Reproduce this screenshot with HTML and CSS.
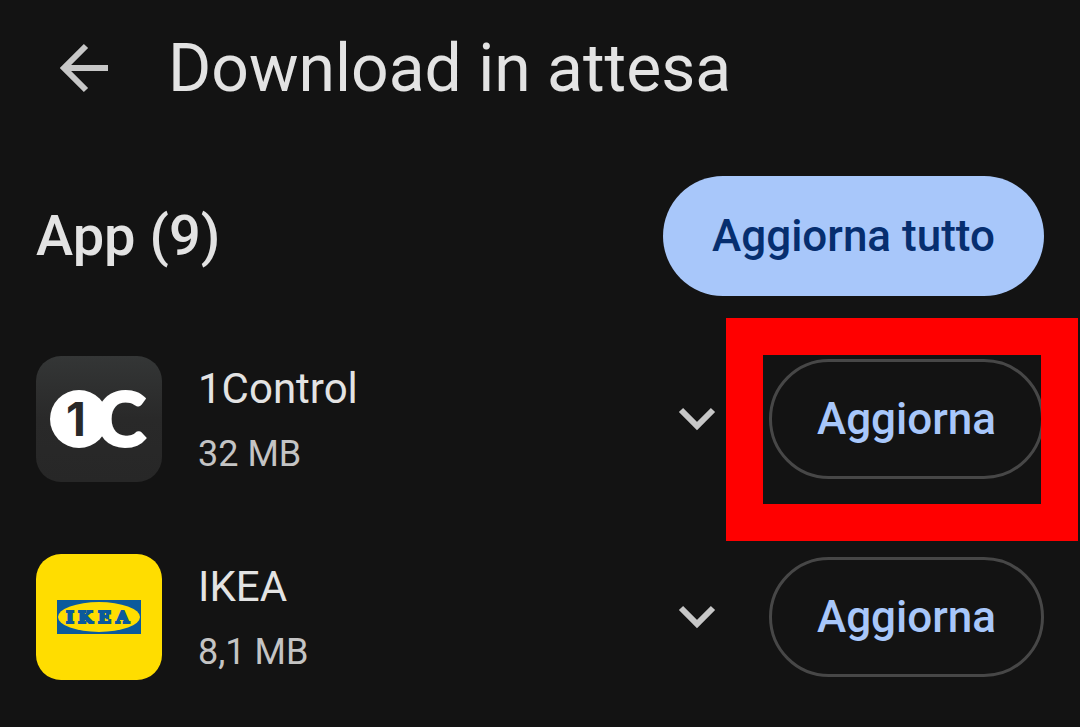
FILE: index.html
```html
<!DOCTYPE html>
<html lang="it">
<head>
    <meta charset="UTF-8">
    <meta name="viewport" content="width=device-width, initial-scale=1.0">
    <title>Download in attesa</title>
    <link rel="stylesheet" href="styles.css">
</head>
<body>
    <header class="topbar">
        <button class="icon-btn" aria-label="Indietro">
            <svg width="72" height="72" viewBox="0 0 72 72" fill="none" stroke="#c7c7c7" stroke-width="6">
                <path d="M60 36H16M38 14L16 36L38 58"/>
            </svg>
        </button>
        <h1>Download in attesa</h1>
    </header>

    <main>
        <div class="section-head">
            <h2>App (9)</h2>
            <button class="btn btn-filled">Aggiorna tutto</button>
        </div>

        <ul class="app-list">
            <li class="app">
                <svg class="app-icon" viewBox="0 0 126 126" role="img" aria-label="1Control">
                    <defs>
                        <linearGradient id="dark" x1="0" y1="0" x2="0" y2="1">
                            <stop offset="0" stop-color="#343636"/>
                            <stop offset="0.5" stop-color="#292929"/>
                            <stop offset="1" stop-color="#272727"/>
                        </linearGradient>
                    </defs>
                    <rect width="126" height="126" fill="url(#dark)"/>
                    <circle cx="43" cy="63" r="29" fill="#fff"/>
                    <text class="logo-c" x="60" y="90">C</text>
                    <text class="logo-one" x="30" y="80">1</text>
                </svg>
                <div class="app-info">
                    <div class="app-name">1Control</div>
                    <div class="app-size">32 MB</div>
                </div>
                <button class="icon-btn" aria-label="Dettagli 1Control">
                    <svg width="72" height="72" viewBox="0 0 72 72" fill="none" stroke="#c7c7c7" stroke-width="6">
                        <path d="M20 27L36 43L52 27"/>
                    </svg>
                </button>
                <div class="action">
                    <button class="btn btn-outline">Aggiorna</button>
                    <span class="highlight"></span>
                </div>
            </li>
            <li class="app">
                <svg class="app-icon" viewBox="0 0 126 126" role="img" aria-label="IKEA">
                    <rect width="126" height="126" fill="#ffdd00"/>
                    <rect x="21" y="46" width="84" height="34" fill="#0b5a9c"/>
                    <ellipse cx="63" cy="63" rx="41" ry="15" fill="#ffdd00"/>
                    <text class="logo-ikea" x="30 42 62 80" y="69">IKEA</text>
                </svg>
                <div class="app-info">
                    <div class="app-name">IKEA</div>
                    <div class="app-size">8,1 MB</div>
                </div>
                <button class="icon-btn" aria-label="Dettagli IKEA">
                    <svg width="72" height="72" viewBox="0 0 72 72" fill="none" stroke="#c7c7c7" stroke-width="6">
                        <path d="M20 27L36 43L52 27"/>
                    </svg>
                </button>
                <div class="action">
                    <button class="btn btn-outline">Aggiorna</button>
                </div>
            </li>
        </ul>
    </main>
</body>
</html>
```
FILE: styles.css
```css
* {
    box-sizing: border-box;
}

body {
    margin: 0;
    background: #131313;
    color: #e3e3e3;
    font-family: Roboto, "Open Sans", sans-serif;
}

h1, h2, ul {
    margin: 0;
    padding: 0;
}

button {
    font-family: inherit;
    cursor: pointer;
}

.topbar {
    display: flex;
    align-items: center;
    gap: 48px;
    height: 136px;
    padding: 0 48px;
}

h1 {
    font-size: 66px;
    font-weight: 400;
}

.icon-btn {
    flex: none;
    width: 72px;
    height: 72px;
    padding: 0;
    border: none;
    background: none;
}

.icon-btn svg {
    display: block;
}

main {
    padding: 40px 36px 0;
}

.section-head {
    display: flex;
    align-items: center;
    justify-content: space-between;
    margin-bottom: 24px;
}

h2 {
    font-size: 56px;
    font-weight: 500;
}

.btn {
    height: 120px;
    padding: 0 44px;
    border: 3px solid transparent;
    border-radius: 60px;
    font-size: 44px;
    font-weight: 500;
    white-space: nowrap;
}

.btn-filled {
    min-width: 381px;
    background: #a8c7fa;
    color: #062e6f;
}

.btn-outline {
    min-width: 275px;
    border-color: #474747;
    background: none;
    color: #a8c7fa;
}

.app-list {
    list-style: none;
}

.app {
    display: flex;
    align-items: center;
    gap: 36px;
    padding: 34px 0;
}

.app-icon {
    flex: none;
    width: 126px;
    height: 126px;
    border-radius: 25px;
}

.app-info {
    flex: 1;
}

.app-name {
    font-size: 42px;
    line-height: 70px;
}

.app-size {
    color: #c4c4c4;
    font-size: 36px;
    line-height: 60px;
}

.action {
    position: relative;
}

/* red frame around the first update button */
.highlight {
    position: absolute;
    top: -41px;
    right: -34px;
    bottom: -62px;
    left: -43px;
    border: 37px solid #ff0000;
    pointer-events: none;
}

.logo-c {
    fill: #fff;
    stroke: #fff;
    stroke-width: 3px;
    font: 900 75px Lato, sans-serif;
}

.logo-one {
    fill: #292929;
    font: 700 46px Inter, sans-serif;
}

.logo-ikea {
    fill: #0b5a9c;
    stroke: #0b5a9c;
    stroke-width: 2px;
    font: bold 17px "DejaVu Serif", serif;
}
```
